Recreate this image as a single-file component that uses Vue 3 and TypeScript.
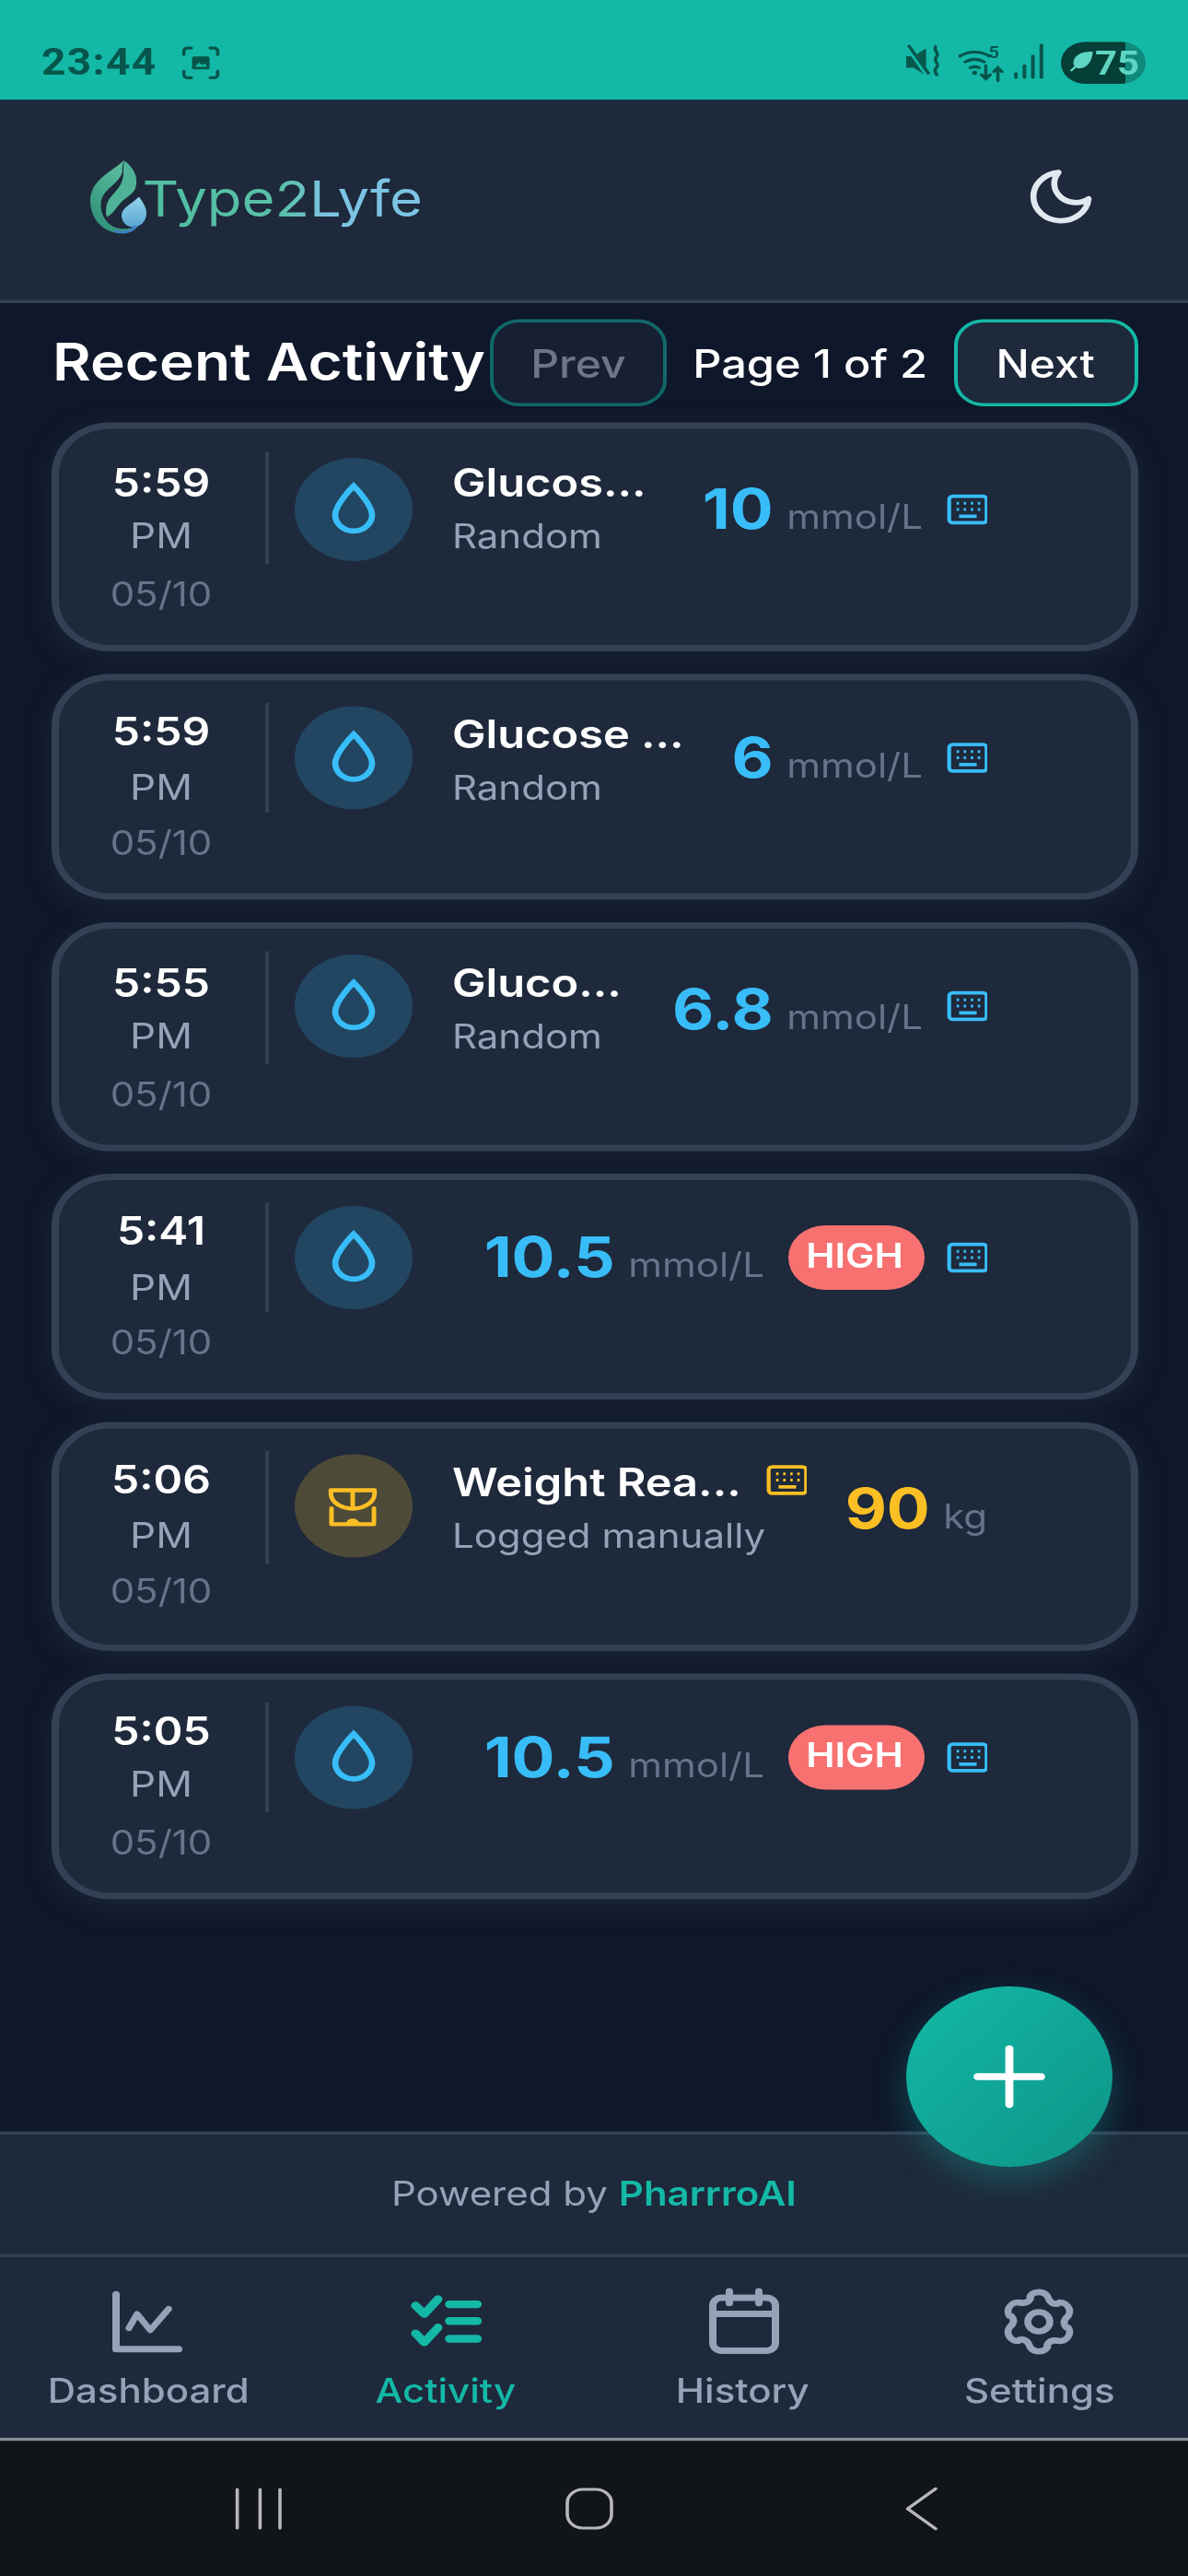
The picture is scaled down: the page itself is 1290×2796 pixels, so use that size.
<script setup lang="ts">
interface Entry {
  time: string
  title?: string
  sub?: string
  value: string
  unit: string
  high?: boolean
  weight?: boolean
}

const entries: Entry[] = [
  { time: '5:59', title: 'Glucos...', sub: 'Random', value: '10', unit: 'mmol/L' },
  { time: '5:59', title: 'Glucose ...', sub: 'Random', value: '6', unit: 'mmol/L' },
  { time: '5:55', title: 'Gluco...', sub: 'Random', value: '6.8', unit: 'mmol/L' },
  { time: '5:41', value: '10.5', unit: 'mmol/L', high: true },
  { time: '5:06', title: 'Weight Rea...', sub: 'Logged manually', value: '90', unit: 'kg', weight: true },
  { time: '5:05', value: '10.5', unit: 'mmol/L', high: true },
]

// six lobed cog, the icon sets we know don't have this exact one
const gearPath = (): string => {
  const pt = (r: number, deg: number): string => {
    const a = (deg * Math.PI) / 180
    return `${(12 + r * Math.cos(a)).toFixed(2)} ${(12 + r * Math.sin(a)).toFixed(2)}`
  }
  let d = ''
  for (let i = 0; i < 6; i++) {
    const a = i * 60 - 90
    d += `${i === 0 ? 'M' : 'L'}${pt(8.2, a - 17)} A2.8 2.8 0 0 1 ${pt(8.2, a + 17)} Q${pt(6.1, a + 30)} ${pt(7.6, a + 43)} `
  }
  return d + 'Z'
}

const navItems = ['Dashboard', 'Activity', 'History', 'Settings']
</script>

<template>
  <div class="shell">
    <div class="status">
      <div class="status-left">
        <span class="clock">23:44</span>
        <svg class="shot" viewBox="0 0 12 12" fill="none" stroke="#07564c" stroke-width="1" stroke-linecap="round">
          <path d="M1 3.2V2a1 1 0 0 1 1-1h1.2M8.8 1H10a1 1 0 0 1 1 1v1.2M11 8.8V10a1 1 0 0 1-1 1H8.8M3.2 11H2a1 1 0 0 1-1-1V8.8" />
          <rect x="3.4" y="3.8" width="5.2" height="4.4" rx=".6" fill="#07564c" stroke="none" />
          <path d="M4.3 7.3l1.2-1.4 1 .9.7-.6.6 1.1z" fill="#14b8a6" stroke="none" />
        </svg>
      </div>
      <div class="status-right">
        <svg class="st-mute" viewBox="0 0 10 12" fill="#07564c">
          <path d="M0 4.4h2L5.4 2v8.4L2 8H0z" />
          <path d="M.4 1.4l5.6 9" stroke="#14b8a6" stroke-width="1.6" />
          <path d="M.6 1l5.6 9" stroke="#07564c" stroke-width=".9" />
          <path d="M8.2 1.2c-1.3 1.3 1.1 2.2 0 3.4s1.1 2.2 0 3.4 .4 1.7 0 2.6" fill="none" stroke="#07564c" stroke-width=".9" />
        </svg>
        <svg class="st-wifi" viewBox="0 0 13 13" fill="none" stroke="#07564c" stroke-width=".9" stroke-linecap="round">
          <path d="M.6 4.4a7 7 0 0 1 8 0M2 6.2a4.6 4.6 0 0 1 5.2 0M3.4 8a2.4 2.4 0 0 1 2.4 0" />
          <circle cx="4.6" cy="9.6" r=".7" fill="#07564c" stroke="none" />
          <text x="8.4" y="5" class="st-five">5</text>
          <path d="M7.6 7.4v4M6.4 10.2l1.2 1.2 1.2-1.2M10.9 12V8M9.8 9.2l1.1-1.2 1.1 1.2" />
        </svg>
        <svg class="st-signal" viewBox="0 0 9 12" fill="#07564c">
          <rect x=".3" y="9.4" width="1" height="2" rx=".4" />
          <rect x="2.6" y="7" width="1" height="4.4" rx=".4" />
          <rect x="4.9" y="4" width="1" height="7.4" rx=".4" />
          <rect x="7.2" y=".6" width="1" height="10.8" rx=".4" />
        </svg>
        <div class="battery">
          <svg class="st-leaf" viewBox="0 0 8 8" fill="#5fd4c2">
            <path d="M7.6.6C4.4.4 1.6 1.8 1.6 4.6c0 .5.1.9.3 1.2L.5 7.2l.5.5 1.4-1.4c2.9 1 5-1.8 5.2-5.7z" />
          </svg>
          <span>75</span>
        </div>
      </div>
    </div>

    <header class="header">
      <div class="logo">
        <svg class="logo-mark" viewBox="0 0 64 84" preserveAspectRatio="none">
          <defs>
            <linearGradient id="leafGrad" x1="0.7" y1="0" x2="0.2" y2="1">
              <stop offset="0" stop-color="#5bbf9f" />
              <stop offset="1" stop-color="#2f8f78" />
            </linearGradient>
            <linearGradient id="dropGrad" x1="0.5" y1="0" x2="0.5" y2="1">
              <stop offset="0" stop-color="#93d3ec" />
              <stop offset="1" stop-color="#5aa6d2" />
            </linearGradient>
          </defs>
          <path d="M39 2C28 14 2 22 2 47c0 17 12 32 28 34 8 1 16-1 22-7-8 4-18 4-26 0C16 68 12 56 14 46c2-9 10-14 16-20 4-4 6-8 7-11-1-5 1-10 2-13z" fill="url(#leafGrad)" />
          <path d="M39 3c10 7 16 18 12 30-3 7-12 10-18 18-4 5-8 11-13 13-2-6-1-14 3-20 6-8 15-14 15-28 0-5 0-9 1-13z" fill="#4fb296" />
          <path d="M55 42c4 6 8 11 8 18 0 8-6 15-14 15s-13-6-13-13c0-8 11-12 19-20z" fill="url(#dropGrad)" />
          <path d="M28 79c8 3 18 2 24-5" fill="none" stroke="#3f7fc0" stroke-width="3" />
        </svg>
        <span class="logo-text">Type2Lyfe</span>
      </div>
      <svg class="moon" viewBox="0 0 24 24" fill="none" stroke="#e2e8f0" stroke-width="2" stroke-linecap="round" stroke-linejoin="round">
        <path d="M21 12.79A9 9 0 1 1 11.21 3 7 7 0 0 0 21 12.79z" />
      </svg>
    </header>

    <main class="main">
      <div class="title-row">
        <h2 class="title">Recent Activity</h2>
        <button class="pager disabled">Prev</button>
        <span class="page-text">Page 1 of 2</span>
        <button class="pager">Next</button>
      </div>

      <div class="list">
        <div v-for="(e, i) in entries" :key="i" class="card">
          <div class="time-col">
            <span class="time">{{ e.time }}</span>
            <span class="ampm">PM</span>
            <span class="date">05/10</span>
          </div>
          <div class="divider"></div>
          <div class="content">
            <div class="circle" :class="{ amber: e.weight }">
              <svg v-if="e.weight" class="scale-icon" viewBox="0 0 164 150" fill="none" stroke="#fbbf24" stroke-width="15" stroke-linecap="round" stroke-linejoin="round">
                <path d="M10 10H154V22C154 56 120 78 82 80 44 78 10 56 10 22ZM82 10V80" />
                <path d="M12 78V138H152V78M66 138C68 120 96 120 98 138" />
              </svg>
              <svg v-else class="drop-icon" viewBox="0 0 24 24" fill="none" stroke="#38bdf8" stroke-width="2">
                <path d="M12 20A6 6 0 0 1 6 14C6 10 12 3.25 12 3.25S18 10 18 14A6 6 0 0 1 12 20Z" />
              </svg>
            </div>
            <div class="info">
              <template v-if="e.title">
                <div class="info-title">
                  <span>{{ e.title }}</span>
                  <svg v-if="e.weight" class="kbd" viewBox="0 0 24 20" fill="none" stroke="#fbbf24" stroke-width="2.2">
                    <rect x="1.4" y="1.4" width="21.2" height="17.2" rx="2" />
                    <path d="M5.6 6h1.4M9.6 6h1.4M13.6 6h1.4M17.6 6h1.4M5.6 10h1.4M9.6 10h1.4M13.6 10h1.4M17.6 10h1.4" stroke-width="1.8" />
                    <path d="M7 14.4h10" />
                  </svg>
                </div>
                <div class="info-sub">{{ e.sub }}</div>
              </template>
            </div>
            <div class="reading">
              <span class="value" :class="{ amber: e.weight }">{{ e.value }}</span>
              <span class="unit">{{ e.unit }}</span>
            </div>
            <span v-if="e.high" class="high">HIGH</span>
            <svg v-if="!e.weight" class="kbd" viewBox="0 0 24 20" fill="none" stroke="#38bdf8" stroke-width="2.2">
              <rect x="1.4" y="1.4" width="21.2" height="17.2" rx="2" />
              <path d="M5.6 6h1.4M9.6 6h1.4M13.6 6h1.4M17.6 6h1.4M5.6 10h1.4M9.6 10h1.4M13.6 10h1.4M17.6 10h1.4" stroke-width="1.8" />
              <path d="M7 14.4h10" />
            </svg>
          </div>
        </div>
      </div>
    </main>

    <div class="powered">Powered by <b>PharrroAI</b></div>

    <nav class="nav">
      <div v-for="(label, n) in navItems" :key="label" class="nav-item" :class="{ active: n === 1 }">
        <svg v-if="n === 0" viewBox="0 0 24 24" fill="none" stroke="#94a3b8" stroke-width="2" stroke-linecap="round" stroke-linejoin="round">
          <path d="M3.5 3.5V20.5H20.5" />
          <path d="M7 14l2.2-4.4 3.6 5 5-6.6" stroke-width="1.8" />
        </svg>
        <svg v-else-if="n === 1" viewBox="0 0 24 24" fill="none" stroke="#14b8a6" stroke-width="2.4" stroke-linecap="round" stroke-linejoin="round">
          <path d="M3.8 7l2.4 2.6 3.7-4.6M3.8 15.6l2.4 2.8 3.7-4.6" />
          <path d="M13 6.6h7.6M13 11.8h7.6M13 17.3h7.6" />
        </svg>
        <svg v-else-if="n === 2" viewBox="0 0 24 24" fill="none" stroke="#94a3b8" stroke-width="2" stroke-linecap="round">
          <rect x="3.5" y="4.6" width="17" height="16.4" rx="2.4" />
          <path d="M3.5 9.6h17M8 2.6v3.6M16 2.6v3.6" />
        </svg>
        <svg v-else viewBox="0 0 24 24" fill="none" stroke="#94a3b8" stroke-width="1.9" stroke-linejoin="round">
          <path :d="gearPath()" />
          <circle cx="12" cy="12" r="3" />
        </svg>
        <span>{{ label }}</span>
      </div>
    </nav>

    <div class="android">
      <svg viewBox="0 0 14 14" fill="none" stroke="#b8b8b8" stroke-width=".9" stroke-linecap="round">
        <path d="M1.4 1v12M7.6 1v12M13 1v12" />
      </svg>
      <svg viewBox="0 0 14 14" fill="none" stroke="#b8b8b8" stroke-width=".9">
        <rect x="1" y="1" width="12" height="12" rx="4.2" />
      </svg>
      <svg viewBox="0 0 14 14" fill="none" stroke="#b8b8b8" stroke-width=".9" stroke-linecap="round" stroke-linejoin="round">
        <path d="M11 .8L3.4 7 11 13.2" />
      </svg>
    </div>

    <button class="fab">
      <svg viewBox="0 0 24 24" fill="none" stroke="#fff" stroke-width="2.4" stroke-linecap="round">
        <path d="M12 2.6v18.8M2.6 12h18.8" />
      </svg>
    </button>
  </div>
</template>

<style scoped>
/* the capture is 4x wide and 3.5x tall, so everything below is in app units */
.shell {
  position: relative;
  width: 322.5px;
  height: 798.86px;
  transform: scale(4, 3.5);
  transform-origin: 0 0;
  display: flex;
  flex-direction: column;
  background: #0f172a;
  font-family: Inter, "Liberation Sans", sans-serif;
  overflow: hidden;
}

.status {
  height: 30.5px;
  flex-shrink: 0;
  padding: 8px 11.25px 0 11.25px;
  box-sizing: border-box;
  background: #14b8a6;
  display: flex;
  align-items: center;
  justify-content: space-between;
  color: #07564c;
}
.status-left {
  display: flex;
  align-items: center;
  gap: 6.5px;
}
.clock {
  font-family: Roboto, sans-serif;
  font-weight: 700;
  font-size: 11.5px;
  letter-spacing: 0.35px;
}
.shot {
  width: 11px;
  height: 11px;
}
.status-right {
  display: flex;
  align-items: center;
}
.st-mute {
  width: 10px;
  height: 12px;
  margin-right: 4px;
}
.st-wifi {
  width: 13px;
  height: 13px;
  margin-right: 2px;
}
.st-five {
  font: 600 5px Roboto, sans-serif;
  fill: #07564c;
  stroke: none;
}
.st-signal {
  width: 9px;
  height: 12px;
  margin-right: 4px;
}
.battery {
  width: 23.5px;
  height: 12.9px;
  border-radius: 6.5px;
  background: linear-gradient(90deg, #063f38 76%, #0f8a7c 76%);
  display: flex;
  align-items: center;
  justify-content: center;
  gap: 0.5px;
  color: #5fd4c2;
  font-family: Roboto, sans-serif;
  font-weight: 700;
  font-size: 10.5px;
}
.st-leaf {
  width: 7px;
  height: 8px;
}

.header {
  height: 63.2px;
  flex-shrink: 0;
  box-sizing: border-box;
  padding: 0 25px 1px 23.6px;
  background: #1e293b;
  border-bottom: 1px solid #334155;
  display: flex;
  align-items: center;
  justify-content: space-between;
}
.logo {
  display: flex;
  align-items: center;
}
.logo-mark {
  width: 16px;
  height: 24px;
  margin-right: -1px;
}
.logo-text {
  font-size: 15.4px;
  background: linear-gradient(90deg, #4fbf9f 0%, #5ac0a8 50%, #7cc4e4 65%, #7cc4e4 100%);
  -webkit-background-clip: text;
  background-clip: text;
  color: transparent;
}
.moon {
  width: 20px;
  height: 20px;
}

.main {
  flex: 1;
  min-height: 0;
  padding: 5.7px 13.75px 0 14.25px;
}
.title-row {
  height: 26.6px;
  display: flex;
  align-items: center;
}
.title {
  margin: 0 4px 0 0;
  padding-bottom: 1px;
  width: 114.75px;
  font-size: 16px;
  font-weight: 600;
  color: #fff;
  white-space: nowrap;
}
.pager {
  width: 48px;
  height: 26.6px;
  padding: 0;
  box-sizing: border-box;
  border: 1px solid #14b8a6;
  border-radius: 8px;
  background: #1e293b;
  color: #fff;
  font-family: inherit;
  font-size: 12px;
  font-weight: 500;
}
.pager:last-child {
  width: 50px;
}
.pager.disabled {
  opacity: 0.5;
  color: #cbd5e1;
}
.page-text {
  width: 78px;
  text-align: center;
  font-size: 12.2px;
  font-weight: 500;
  color: #fff;
}

.list {
  margin-top: 5.4px;
  display: flex;
  flex-direction: column;
  gap: 7.2px;
}
.card {
  height: 70.3px;
  box-sizing: border-box;
  padding: 7px 38.75px 0 0;
  border: 2px solid #334155;
  border-radius: 16px;
  background: #1e293b;
  box-shadow: 0 2px 8px rgba(51, 65, 85, 0.35);
  display: flex;
  align-items: flex-start;
}
.time-col {
  width: 55px;
  flex-shrink: 0;
  display: flex;
  flex-direction: column;
  align-items: center;
  padding-top: 0.2px;
  line-height: 17.5px;
}
.time {
  font-size: 12px;
  font-weight: 600;
  color: #fff;
}
.ampm {
  font-size: 11px;
  color: #94a3b8;
}
.date {
  font-size: 10.5px;
  color: #64748b;
}
.divider {
  width: 1px;
  height: 34.3px;
  flex-shrink: 0;
  margin-left: 0.4px;
  background: #334155;
}
.content {
  flex: 1;
  min-width: 0;
  height: 34.3px;
  margin-left: 7.6px;
  display: flex;
  align-items: center;
}
.circle {
  width: 32px;
  height: 32px;
  flex-shrink: 0;
  border-radius: 50%;
  background: #224662;
  display: flex;
  align-items: center;
  justify-content: center;
}
.circle.amber {
  background: #4e4a38;
}
.drop-icon {
  width: 20px;
  height: 20px;
}
.scale-icon {
  width: 13.5px;
  height: 13px;
}
.info {
  flex: 1;
  min-width: 0;
  margin-left: 10.5px;
  padding-top: 1px;
  line-height: 17px;
  white-space: nowrap;
}
.info-title {
  display: flex;
  align-items: center;
  gap: 6.5px;
  font-size: 12.2px;
  font-weight: 600;
  color: #fff;
}
.info-sub {
  font-size: 10.5px;
  color: #94a3b8;
}
.reading {
  display: flex;
  align-items: baseline;
  gap: 3.6px;
}
.value {
  font-size: 17.4px;
  font-weight: 700;
  color: #38bdf8;
}
.value.amber {
  color: #fbbf24;
}
.unit {
  font-size: 10.5px;
  color: #64748b;
}
.high {
  width: 37px;
  height: 19.6px;
  margin-left: 6px;
  flex-shrink: 0;
  border-radius: 10px;
  background: #f87171;
  color: #fff;
  font-size: 10.5px;
  font-weight: 600;
  line-height: 19.6px;
  text-align: center;
}
.kbd {
  width: 11.5px;
  height: 10px;
  flex-shrink: 0;
}
.reading + .kbd {
  margin-left: 6px;
}
.high + .kbd {
  margin-left: 6px;
}

.powered {
  height: 38px;
  flex-shrink: 0;
  box-sizing: border-box;
  background: #1e293b;
  border-top: 1px solid #334155;
  display: flex;
  align-items: center;
  justify-content: center;
  gap: 3px;
  font-size: 10.5px;
  color: #94a3b8;
}
.powered b {
  font-weight: 600;
  color: #14b8a6;
}

.nav {
  height: 58.6px;
  flex-shrink: 0;
  box-sizing: border-box;
  background: #1e293b;
  border-top: 1px solid #334155;
  border-bottom: 0.8px solid #8a9099;
  display: flex;
}
.nav-item {
  flex: 1;
  display: flex;
  flex-direction: column;
  align-items: center;
  padding-top: 8px;
  font-size: 10.5px;
  font-weight: 500;
  color: #94a3b8;
}
.nav-item svg {
  width: 24px;
  height: 24px;
  margin-bottom: 3px;
}
.nav-item.active {
  color: #14b8a6;
}

.android {
  height: 41.6px;
  flex-shrink: 0;
  background: #111418;
  display: grid;
  grid-template-columns: repeat(3, 90px);
  justify-content: center;
  justify-items: center;
  align-items: center;
  padding-right: 3px;
}
.android svg {
  width: 14px;
  height: 14px;
}

.fab {
  position: absolute;
  right: 21px;
  bottom: 127px;
  width: 56px;
  height: 56px;
  padding: 0;
  border: none;
  border-radius: 50%;
  background: linear-gradient(135deg, #14b8a6, #0d9488);
  box-shadow: 0 4px 10px rgba(20, 184, 166, 0.3);
  display: flex;
  align-items: center;
  justify-content: center;
}
.fab svg {
  width: 22px;
  height: 22px;
}
</style>

<style>
html,
body {
  margin: 0;
  width: 1290px;
  height: 2796px;
  overflow: hidden;
  background: #0f172a;
}
</style>
